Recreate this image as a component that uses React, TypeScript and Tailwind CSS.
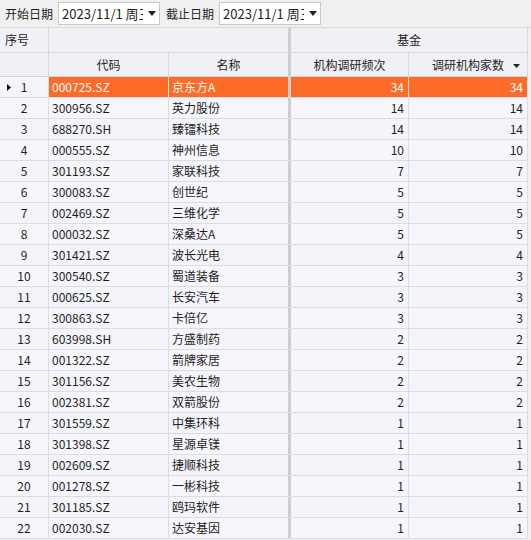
import React from "react";

const rows: [string, string, number, number][] = [
  ["000725.SZ", "京东方A", 34, 34],
  ["300956.SZ", "英力股份", 14, 14],
  ["688270.SH", "臻镭科技", 14, 14],
  ["000555.SZ", "神州信息", 10, 10],
  ["301193.SZ", "家联科技", 7, 7],
  ["300083.SZ", "创世纪", 5, 5],
  ["002469.SZ", "三维化学", 5, 5],
  ["000032.SZ", "深桑达A", 5, 5],
  ["301421.SZ", "波长光电", 4, 4],
  ["300540.SZ", "蜀道装备", 3, 3],
  ["000625.SZ", "长安汽车", 3, 3],
  ["300863.SZ", "卡倍亿", 3, 3],
  ["603998.SH", "方盛制药", 2, 2],
  ["001322.SZ", "箭牌家居", 2, 2],
  ["301156.SZ", "美农生物", 2, 2],
  ["002381.SZ", "双箭股份", 2, 2],
  ["301559.SZ", "中集环科", 1, 1],
  ["301398.SZ", "星源卓镁", 1, 1],
  ["002609.SZ", "捷顺科技", 1, 1],
  ["001278.SZ", "一彬科技", 1, 1],
  ["301185.SZ", "鸥玛软件", 1, 1],
  ["002030.SZ", "达安基因", 1, 1],
];

function DateBox({ value }: { value: string }) {
  return (
    <div className="flex h-[23px] w-[102px] items-center border border-[#c8c8c8] bg-white">
      <div className="w-[84px] overflow-hidden whitespace-nowrap pl-[3px] text-[13px]">{value}</div>
      <svg width="8" height="5" viewBox="0 0 8 5" className="ml-[5px]">
        <path d="M0 0h8L4 5z" fill="#222" />
      </svg>
    </div>
  );
}

export default function App() {
  return (
    <div
      className="h-[540px] w-[531px] overflow-hidden bg-[#f0f0f3] text-[12px] text-[#1e1e1e]"
      style={{ fontFamily: '"Microsoft YaHei", "Noto Sans CJK SC", sans-serif' }}
    >
      {/* toolbar */}
      <div className="flex h-[28px] items-center gap-[5px] border-b border-[#d8d8dc] bg-[#f0f0f0] pl-[5px]">
        <span className="text-[12px]">开始日期</span>
        <DateBox value="2023/11/1 周三" />
        <span className="ml-[1px] text-[12px]">截止日期</span>
        <DateBox value="2023/11/1 周三" />
      </div>

      {/* header row 1 */}
      <div className="flex h-[25px] w-[528px] border-b border-[#d6d6de] bg-[#f1f1f5]">
        <div className="flex w-[49px] items-center border-r border-[#d6d6de] pl-[5px]">序号</div>
        <div className="w-[242px] border-r-[3px] border-[#cdcdd6]" />
        <div className="flex w-[237px] items-center justify-center border-r border-[#d6d6de]">基金</div>
      </div>

      {/* header row 2 */}
      <div className="flex h-[24px] w-[528px] border-b border-[#d6d6de] bg-[#f1f1f5]">
        <div className="w-[49px] border-r border-[#d6d6de]" />
        <div className="flex w-[120px] items-center justify-center border-r border-[#d6d6de]">代码</div>
        <div className="flex w-[122px] items-center justify-center border-r-[3px] border-[#cdcdd6]">名称</div>
        <div className="flex w-[118px] items-center justify-center border-r border-[#d6d6de]">机构调研频次</div>
        <div className="relative flex w-[119px] items-center justify-center border-r border-[#d6d6de]">
          调研机构家数
          <svg width="7" height="4" viewBox="0 0 7 4" className="absolute right-[7px] top-[11px]">
            <path d="M0 0h7L3.5 4z" fill="#222" />
          </svg>
        </div>
      </div>

      {/* data rows */}
      {rows.map(([code, name, freq, count], i) => {
        const sel = i === 0;
        const bg = sel ? "bg-[#fd6b28] text-white" : i % 2 === 0 ? "bg-[#f3f5fa]" : "bg-[#f8f6fd]";
        const rowBg = i % 2 === 0 ? "bg-[#f3f5fa]" : "bg-[#f8f6fd]";
        return (
          <div key={i} className="flex h-[21px] w-[528px] border-b border-[#dcdce3]">
            <div className={`relative flex w-[49px] items-center justify-center border-r border-[#dcdce3] ${rowBg}`}>
              {sel && (
                <svg width="4" height="7" viewBox="0 0 4 7" className="absolute left-[7px] top-[7px]">
                  <path d="M0 0l4 3.5L0 7z" fill="#111" />
                </svg>
              )}
              {i + 1}
            </div>
            <div className={`flex w-[120px] items-center border-r border-[#dcdce3] pl-[3px] ${bg}`}>{code}</div>
            <div className={`flex w-[122px] items-center border-r-[3px] border-[#cdcdd6] pl-[3px] ${bg}`}>{name}</div>
            <div className={`flex w-[118px] items-center justify-end border-r border-[#dcdce3] pr-[4px] ${bg}`}>{freq}</div>
            <div className={`flex w-[119px] items-center justify-end border-r border-[#dcdce3] pr-[4px] ${bg}`}>{count}</div>
          </div>
        );
      })}
    </div>
  );
}
